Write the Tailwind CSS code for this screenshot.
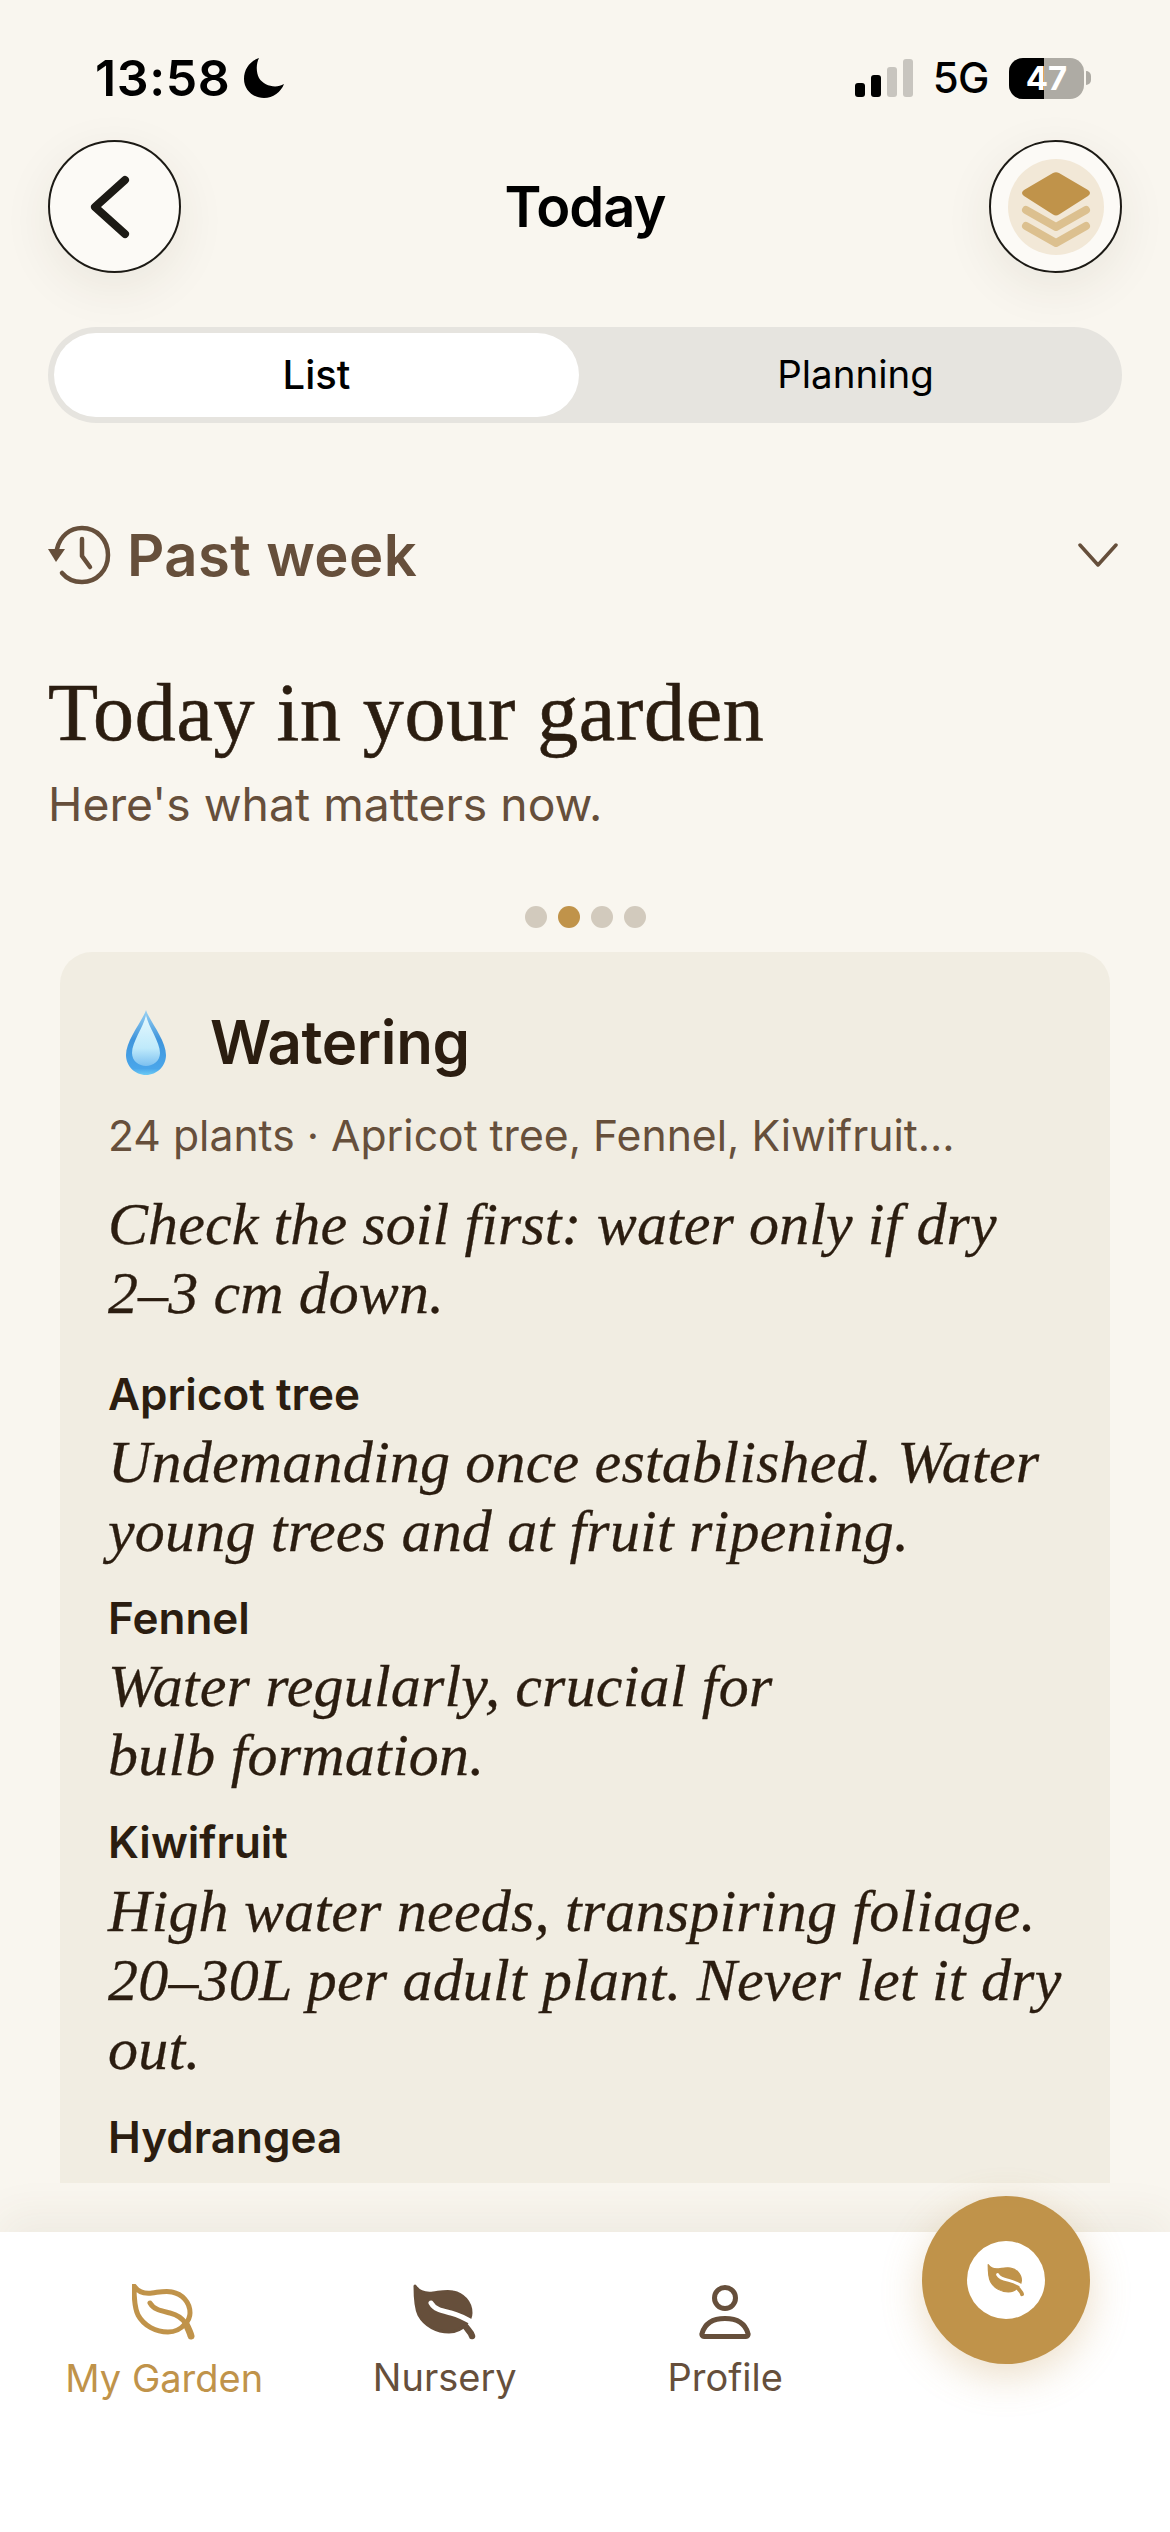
<!DOCTYPE html>
<html lang="en">
<head>
  <meta charset="UTF-8">
  <title>Today</title>
  <script src="https://cdn.jsdelivr.net/npm/@tailwindcss/browser@4"></script>
</head>
<body class="bg-[#f9f6ef]">
<div class="relative w-[1170px] h-[2532px] overflow-hidden flex flex-col bg-[#f9f6ef] font-['Inter',sans-serif] text-black">

  <!-- status bar -->
  <div class="h-[124px] mt-[16px] shrink-0 flex items-center justify-between pl-[95px] pr-[79px]">
    <div class="flex items-center gap-[14px]">
      <span class="text-[50px] font-semibold leading-none tracking-[0.6px]">13:58</span>
      <svg class="w-[40px] h-[40px]" viewBox="0 0 40 40"><path d="M15 0 C6 3 0 11 0 21 C0 32 9 40 20 40 C29 40 37 34 40 26 C32 31 20 28 15 20 C12 14 12 6 15 0Z" fill="#000"/></svg>
    </div>
    <div class="flex items-center">
      <div class="flex items-end gap-[6px] h-[38px]">
        <div class="w-[10px] h-[14px] rounded-[3px] bg-black"></div>
        <div class="w-[10px] h-[22px] rounded-[3px] bg-black"></div>
        <div class="w-[10px] h-[30px] rounded-[3px] bg-[#c8c5bf]"></div>
        <div class="w-[10px] h-[38px] rounded-[3px] bg-[#c8c5bf]"></div>
      </div>
      <span class="ml-[20px] text-[42px] font-medium leading-none tracking-[-0.5px]">5G</span>
      <div class="ml-[20px] relative w-[75px] h-[41px] rounded-[14px] overflow-hidden bg-[#aeaba4] flex items-center justify-center">
        <div class="absolute left-0 top-0 bottom-0 w-[35px] bg-black"></div>
        <span class="relative text-[33px] font-bold text-white leading-none">47</span>
      </div>
      <div class="ml-[2px] w-[5px] h-[14px] rounded-r-full bg-[#aeaba4]"></div>
    </div>
  </div>

  <!-- nav row -->
  <div class="h-[133px] shrink-0 mx-[48px] flex items-center justify-between">
    <button class="w-[133px] h-[133px] rounded-full border-2 border-[#1c1a15] bg-[#fcfaf6] shadow-[0_14px_50px_rgba(60,45,20,0.08)] flex items-center justify-center">
      <svg class="w-[60px] h-[70px]" viewBox="0 0 60 70" fill="none"><path d="M40 8 L10 35 L40 62" stroke="#1c1a15" stroke-width="8" stroke-linecap="round" stroke-linejoin="round"/></svg>
    </button>
    <h1 class="text-[56px] font-semibold leading-none tracking-[-1px]">Today</h1>
    <button class="w-[133px] h-[133px] rounded-full border-2 border-[#1c1a15] bg-[#fcfaf6] shadow-[0_14px_50px_rgba(60,45,20,0.08)] flex items-center justify-center">
      <span class="w-[96px] h-[96px] rounded-full bg-[#f2e8d7] flex items-center justify-center">
        <svg class="w-[70px] h-[77px] mt-[7px]" viewBox="0 0 70 77" fill="none">
          <path d="M32 1 Q35 -0.5 38 1 L67 18 Q71 21 67 24 L38 42.5 Q35 44.5 32 42.5 L3 24 Q-1 21 3 18Z" fill="#c0934a"/>
          <path d="M5 38 L35 55 L65 38" stroke="#dcc08f" stroke-width="8" stroke-linejoin="round" stroke-linecap="round"/>
          <path d="M5 54 L35 71 L65 54" stroke="#dcc08f" stroke-width="8" stroke-linejoin="round" stroke-linecap="round"/>
        </svg>
      </span>
    </button>
  </div>

  <!-- segmented control -->
  <div class="mt-[54px] mx-[48px] h-[96px] shrink-0 rounded-full bg-[#e6e4df] p-[6px] flex">
    <div class="w-[525px] rounded-full bg-white flex items-center justify-center text-[40px] font-medium">List</div>
    <div class="flex-1 pl-[16px] flex items-center justify-center text-[38.5px]">Planning</div>
  </div>

  <!-- past week -->
  <div class="mt-[100px] mx-[48px] h-[64px] shrink-0 flex items-center justify-between text-[#664f3b]">
    <div class="flex items-center gap-[15px]">
      <svg class="w-[64px] h-[60px]" viewBox="0 0 64 60" fill="none">
        <path d="M9 24 C12 11 22 3 34 3 C49 3 60 15 60 30 C60 45 49 57 34 57 C26 57 19 54 14 48" stroke="#664f3b" stroke-width="4.5" stroke-linecap="round"/>
        <path d="M0 24 L17 24 L8 37Z" fill="#664f3b"/>
        <path d="M34 14 V31 L42 42" stroke="#664f3b" stroke-width="4.5" stroke-linecap="round" stroke-linejoin="round"/>
      </svg>
      <span class="text-[58px] font-semibold leading-none tracking-[0.4px]">Past week</span>
    </div>
    <svg class="w-[40px] h-[26px] mr-[4px]" viewBox="0 0 40 26" fill="none"><path d="M2 3 L20 23 L38 3" stroke="#664f3b" stroke-width="3.5" stroke-linecap="round" stroke-linejoin="round"/></svg>
  </div>

  <!-- main heading -->
  <h2 class="mt-[86px] mx-[48px] h-[80px] shrink-0 font-['Liberation_Serif',serif] text-[82px] leading-[80px] text-[#2b1d10] tracking-[0.7px] [-webkit-text-stroke:0.6px_#2b1d10]">Today in your garden</h2>
  <p class="mt-[23px] mx-[48px] h-[56px] shrink-0 text-[46.3px] leading-[56px] text-[#664f3b]">Here's what matters now.</p>

  <!-- pager dots -->
  <div class="mt-[74px] h-[22px] shrink-0 flex justify-center gap-[11px]">
    <span class="w-[22px] h-[22px] rounded-full bg-[#d2cabd]"></span>
    <span class="w-[22px] h-[22px] rounded-full bg-[#c0934a]"></span>
    <span class="w-[22px] h-[22px] rounded-full bg-[#d2cabd]"></span>
    <span class="w-[22px] h-[22px] rounded-full bg-[#d2cabd]"></span>
  </div>

  <div class="mt-[24px] mx-[60px] h-[1231px] shrink-0 overflow-hidden rounded-t-[32px] bg-[#f1ede2] pt-[50px] pl-[48px] pr-[30px] whitespace-nowrap">
    <div class="h-[80px] flex items-center">
      <svg class="ml-[18px] w-[40px] h-[65px]" viewBox="0 0 40 65">
        <defs>
          <linearGradient id="dropBase" x1="0" y1="0" x2="0" y2="1">
            <stop offset="0" stop-color="#9ad2f3"/>
            <stop offset="0.45" stop-color="#3f95dc"/>
            <stop offset="0.9" stop-color="#4aa6ea"/>
            <stop offset="1" stop-color="#6ccbf5"/>
          </linearGradient>
          <linearGradient id="dropGlow" x1="0" y1="0" x2="0" y2="1">
            <stop offset="0" stop-color="#e6f8fd"/>
            <stop offset="0.65" stop-color="#bfeafb"/>
            <stop offset="1" stop-color="#7cc0f0"/>
          </linearGradient>
        </defs>
        <path d="M20 0 C23 10 40 30 40 45 C40 56 31 65 20 65 C9 65 0 56 0 45 C0 30 17 10 20 0Z" fill="url(#dropBase)"/>
        <path d="M20 5 C22 16 34 32 34 43 C34 51 27 56 20 56 C13 56 6 51 6 43 C6 32 18 16 20 5Z" fill="url(#dropGlow)"/>
      </svg>
      <h3 class="ml-[44px] text-[60px] font-semibold leading-none text-[#2b1d10] tracking-[-0.4px]">Watering</h3>
    </div>
    <p class="mt-[26px] h-[56px] text-[42.7px] leading-[56px] text-[#664f3b]">24 plants · Apricot tree, Fennel, Kiwifruit...</p>
    <p class="mt-[26px] font-['Liberation_Serif',serif] italic text-[60px] leading-[69px] tracking-[0.1px] text-[#2b1d10] [-webkit-text-stroke:0.3px_#2b1d10]">Check the soil first: water only if dry<br>2–3 cm down.</p>

    <h4 class="mt-[38px] h-[56px] text-[44px] font-semibold leading-[56px] text-[#2b1d10]">Apricot tree</h4>
    <p class="mt-[6px] font-['Liberation_Serif',serif] italic text-[60px] leading-[69px] tracking-[0.2px] text-[#2b1d10] [-webkit-text-stroke:0.3px_#2b1d10]">Undemanding once established. Water<br>young trees and at fruit ripening.</p>

    <h4 class="mt-[24px] h-[56px] text-[44px] font-semibold leading-[56px] text-[#2b1d10]">Fennel</h4>
    <p class="mt-[6px] font-['Liberation_Serif',serif] italic text-[60px] leading-[69px] tracking-[0.2px] text-[#2b1d10] [-webkit-text-stroke:0.3px_#2b1d10]">Water regularly, crucial for<br>bulb formation.</p>

    <h4 class="mt-[24px] h-[56px] text-[44px] font-semibold leading-[56px] text-[#2b1d10]">Kiwifruit</h4>
    <p class="mt-[7px] font-['Liberation_Serif',serif] italic text-[60px] leading-[69px] tracking-[0.2px] text-[#2b1d10] [-webkit-text-stroke:0.3px_#2b1d10]">High water needs, transpiring foliage.<br>20–30L per adult plant. Never let it dry<br>out.</p>

    <h4 class="mt-[25px] h-[56px] text-[44px] font-semibold leading-[56px] text-[#2b1d10]">Hydrangea</h4>
  </div>

  <!-- tab bar -->
  <div class="mt-[49px] flex-1 bg-white px-[24px] pt-[52px] grid grid-cols-4 shadow-[0_-18px_40px_rgba(90,70,40,0.06)]">
    <div class="flex flex-col items-center text-[#c0934a]">
      <svg class="w-[64px] h-[56px]" viewBox="0 0 64 56" fill="none" stroke="#c0934a" stroke-width="5" stroke-linecap="round" stroke-linejoin="round">
        <path d="M2 2 C6 8 12 10 20 9 C28 8 34 6.5 40 8 C50 10 58 18 58 29 C58 33 56 37 53 40 C48 46 42 48 36 48 C24 48 12 42 6 31 C2 23 2 10 2 2Z"/>
        <path d="M18 19 C22 26 30 27 38 29 C46 31 51 35 54 40"/>
        <path d="M54 40 C56 44 58 48 59 52" stroke-width="7"/>
      </svg>
      <span class="mt-[13px] text-[38px] leading-[50px]">My Garden</span>
    </div>
    <div class="flex flex-col items-center text-[#664f3b]">
      <svg class="w-[64px] h-[56px]" viewBox="0 0 64 56" fill="none" stroke-linecap="round">
        <path d="M2 2 C6 8 12 10 20 9 C28 8 34 6.5 40 8 C50 10 58 18 58 29 C58 33 56 37 53 40 C48 46 42 48 36 48 C24 48 12 42 6 31 C2 23 2 10 2 2Z" fill="#664f3b" stroke="#664f3b" stroke-width="3" stroke-linejoin="round"/>
        <path d="M18 19 C22 26 30 27 38 29 C46 31 52 34 62 40" stroke="#fff" stroke-width="5"/>
        <path d="M53 43 C55 46 58 48 59 52" stroke="#664f3b" stroke-width="6.5"/>
      </svg>
      <span class="mt-[12px] text-[38px] leading-[50px]">Nursery</span>
    </div>
    <div class="flex flex-col items-center text-[#664f3b]">
      <svg class="w-[52px] h-[56px]" viewBox="0 0 52 56" fill="none" stroke="#664f3b" stroke-width="5" stroke-linejoin="round">
        <circle cx="26" cy="14" r="10.5"/>
        <path d="M5 52.5 C3.5 52.5 2.5 51 3 49.5 C6 39 15 34.5 26 34.5 C37 34.5 46 39 49 49.5 C49.5 51 48.5 52.5 47 52.5Z"/>
      </svg>
      <span class="mt-[12px] text-[38px] leading-[50px]">Profile</span>
    </div>
  </div>

  <!-- floating action button -->
  <button class="absolute left-[922px] top-[2196px] w-[168px] h-[168px] rounded-full bg-[#c0934a] shadow-[0_12px_40px_rgba(192,147,74,0.3)] flex items-center justify-center">
    <span class="w-[78px] h-[78px] rounded-full bg-white flex items-center justify-center">
      <svg class="w-[38px] h-[34px]" viewBox="0 0 64 56" fill="none" stroke-linecap="round">
        <path d="M2 2 C6 8 12 10 20 9 C28 8 34 6.5 40 8 C50 10 58 18 58 29 C58 33 56 37 53 40 C48 46 42 48 36 48 C24 48 12 42 6 31 C2 23 2 10 2 2Z" fill="#c0934a" stroke="#c0934a" stroke-width="2" stroke-linejoin="round"/>
        <path d="M18 19 C22 26 30 27 38 29 C46 31 52 34 62 40" stroke="#fff" stroke-width="5"/>
        <path d="M53 43 C55 46 58 48 59 52" stroke="#c0934a" stroke-width="6.5"/>
      </svg>
    </span>
  </button>
</div>
</body>
</html>
